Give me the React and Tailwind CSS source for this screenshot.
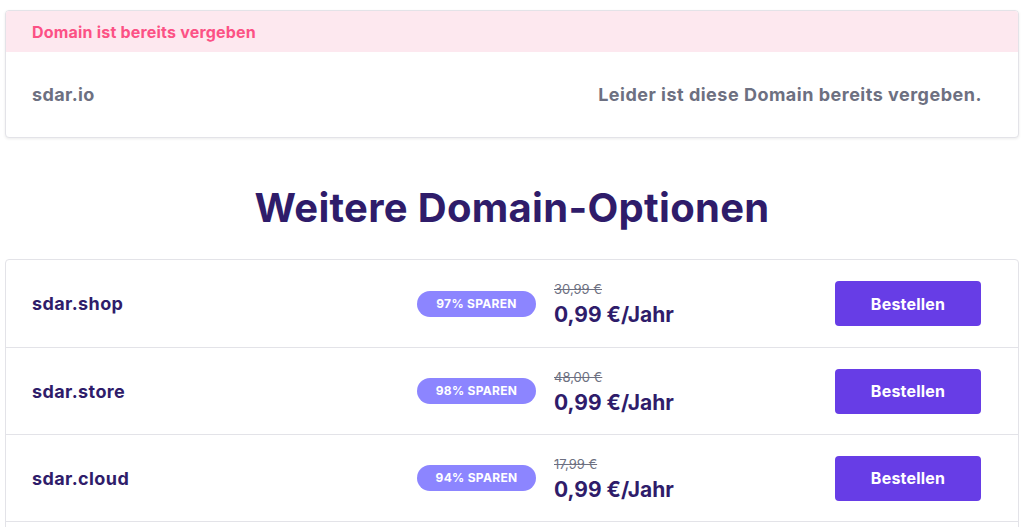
export default function App() {
  const rows = [
    { name: "sdar.shop", save: "97% SPAREN", old: "30,99 €" },
    { name: "sdar.store", save: "98% SPAREN", old: "48,00 €" },
    { name: "sdar.cloud", save: "94% SPAREN", old: "17,99 €" },
    { name: "sdar.online", save: "95% SPAREN", old: "19,99 €" },
  ];
  return (
    <div className="min-h-screen bg-white px-[5px] pt-[10px] font-['Inter',sans-serif]">
      <div className="rounded-[4px] border border-[#e3e3e8] bg-white shadow-[0_1px_3px_rgba(0,0,0,0.08)] overflow-hidden">
        <div className="h-[41px] bg-[#fde8ef] px-[26px] flex items-center">
          <span className="text-[16px] font-bold tracking-[0.2px] text-[#fc5185]">Domain ist bereits vergeben</span>
        </div>
        <div className="h-[85px] px-[26px] flex items-center justify-between">
          <span className="text-[18px] font-bold tracking-[0.4px] text-[#6d7081]">sdar.io</span>
          <span className="mr-[10px] text-[18px] font-bold tracking-[0.5px] text-[#6d7081]">Leider ist diese Domain bereits vergeben.</span>
        </div>
      </div>
      <h1 className="mt-[44px] mb-[25px] text-center text-[40px] leading-[52px] font-bold text-[#2f1c6a] tracking-[0.3px]">
        Weitere Domain-Optionen
      </h1>
      <div className="rounded-[4px] border border-[#e3e3e8] bg-white">
        {rows.map((r, i) => (
          <div
            key={r.name}
            className={`h-[87px] pl-[26px] pr-[37px] flex items-center ${i > 0 ? "border-t border-[#e3e3e8]" : ""}`}
          >
            <span className="flex-1 text-[18px] font-bold tracking-[0.4px] text-[#2f1c6a]">{r.name}</span>
            <span className="w-[119px] h-[26px] rounded-full bg-[#8c85ff] flex items-center justify-center text-[12px] font-bold tracking-[0.3px] text-white">
              {r.save}
            </span>
            <div className="ml-[18px] w-[281px] flex flex-col pt-[2px]">
              <span className="text-[13px] leading-[18px] text-[#6d7081] line-through">{r.old}</span>
              <span className="mt-[3px] text-[21px] leading-[28px] font-bold text-[#2f1c6a]">0,99 €/Jahr</span>
            </div>
            <button className="w-[146px] h-[45px] rounded-[4px] bg-[#673de6] text-white text-[16px] font-bold tracking-[0.2px]">
              Bestellen
            </button>
          </div>
        ))}
      </div>
    </div>
  );
}
